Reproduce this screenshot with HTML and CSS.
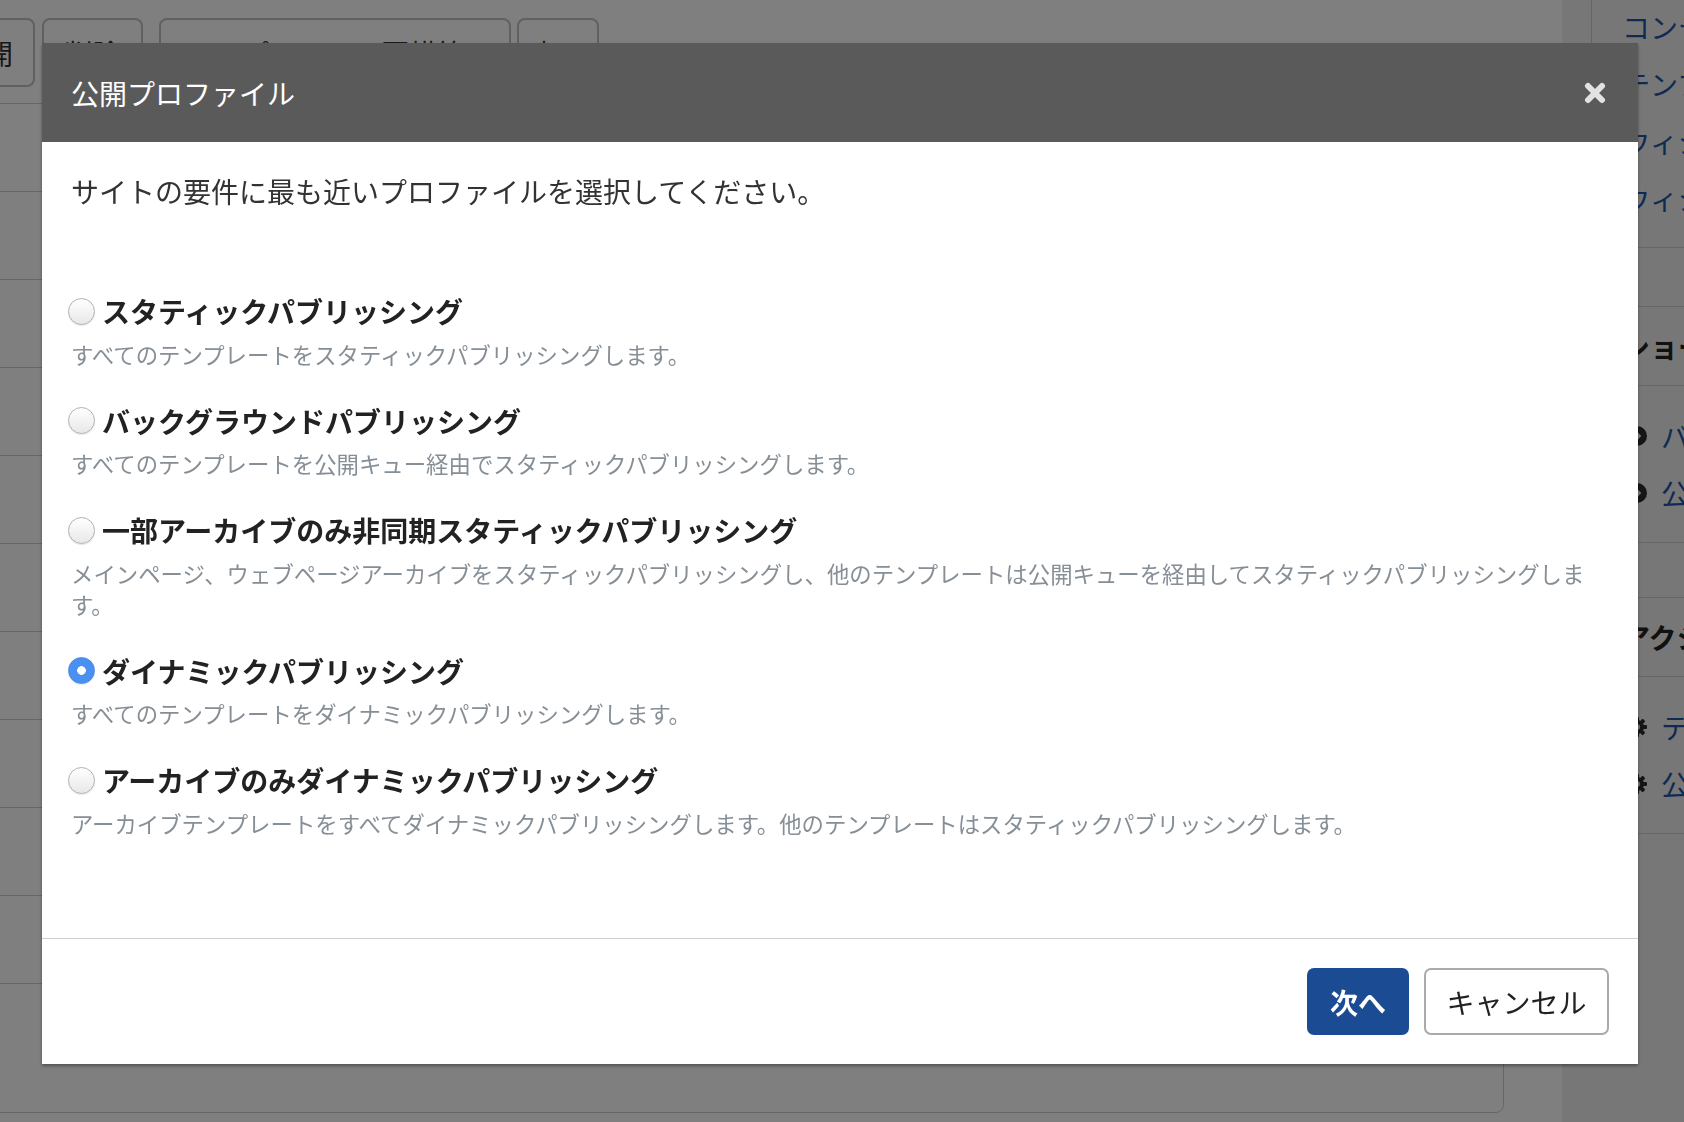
FILE: index.html
```html
<!DOCTYPE html>
<html lang="ja">

<head>
    <meta charset="UTF-8">
    <title>公開プロファイル</title>
    <link rel="stylesheet" href="styles.css">
</head>

<body>

    <div class="page">

        <!-- Contenido principal (detrás del modal) -->
        <div class="main">
            <div class="toolbar">
                <button class="tool tool-publish">公開</button>
                <button class="tool tool-delete">削除</button>
                <button class="tool tool-rebuild">テンプレートの再構築</button>
                <button class="tool tool-more">表示</button>
            </div>

            <div class="panel">
                <div class="row"></div>
                <div class="row"></div>
                <div class="row"></div>
                <div class="row"></div>
                <div class="row"></div>
                <div class="row"></div>
                <div class="row"></div>
                <div class="row"></div>
                <div class="row"></div>
                <div class="row"></div>
            </div>
        </div>

        <!-- Barra lateral -->
        <aside class="sidebar">
            <div class="card card-first">
                <ul class="links">
                    <li><a>コンテンツタイプ</a></li>
                    <li><a>テンプレート</a></li>
                    <li><a>ウィジェット</a></li>
                    <li><a>ウィジェットセット</a></li>
                </ul>
            </div>

            <div class="card card-shortcut">
                <h3 class="card-title">ショートカット</h3>
                <ul class="links icon-links">
                    <li>
                        <svg class="icon" viewBox="0 0 22 22">
                            <circle cx="11" cy="11" r="10" fill="#2b2b2b" />
                            <path d="M9 6.5 L13.5 11 L9 15.5" stroke="#efefef" stroke-width="2.6" fill="none" />
                        </svg>
                        <a>バックアップ</a>
                    </li>
                    <li>
                        <svg class="icon" viewBox="0 0 22 22">
                            <circle cx="11" cy="11" r="10" fill="#2b2b2b" />
                            <path d="M9 6.5 L13.5 11 L9 15.5" stroke="#efefef" stroke-width="2.6" fill="none" />
                        </svg>
                        <a>公開キュー</a>
                    </li>
                </ul>
            </div>

            <div class="card card-action">
                <h3 class="card-title">アクション</h3>
                <ul class="links icon-links">
                    <li>
                        <svg class="icon" viewBox="0 0 22 22">
                            <g fill="#2b2b2b">
                                <rect x="9" y="1" width="4" height="20" rx="1" />
                                <rect x="9" y="1" width="4" height="20" rx="1" transform="rotate(45 11 11)" />
                                <rect x="9" y="1" width="4" height="20" rx="1" transform="rotate(90 11 11)" />
                                <rect x="9" y="1" width="4" height="20" rx="1" transform="rotate(135 11 11)" />
                                <circle cx="11" cy="11" r="7" />
                            </g>
                            <circle cx="11" cy="11" r="3" fill="#efefef" />
                        </svg>
                        <a>テンプレートの初期化</a>
                    </li>
                    <li>
                        <svg class="icon" viewBox="0 0 22 22">
                            <g fill="#2b2b2b">
                                <rect x="9" y="1" width="4" height="20" rx="1" />
                                <rect x="9" y="1" width="4" height="20" rx="1" transform="rotate(45 11 11)" />
                                <rect x="9" y="1" width="4" height="20" rx="1" transform="rotate(90 11 11)" />
                                <rect x="9" y="1" width="4" height="20" rx="1" transform="rotate(135 11 11)" />
                                <circle cx="11" cy="11" r="7" />
                            </g>
                            <circle cx="11" cy="11" r="3" fill="#efefef" />
                        </svg>
                        <a>公開プロファイル</a>
                    </li>
                </ul>
            </div>
        </aside>

    </div>

    <div class="backdrop"></div>

    <!-- Modal -->
    <div class="modal">
        <div class="modal-header">
            <h2 class="modal-title">公開プロファイル</h2>
            <button class="close" aria-label="閉じる">
                <svg viewBox="0 0 22 22" width="22" height="22">
                    <path d="M4 4 L18 18 M18 4 L4 18" stroke="#e2e2e2" stroke-width="6" stroke-linecap="round" />
                </svg>
            </button>
        </div>

        <div class="modal-body">
            <p class="lead">サイトの要件に最も近いプロファイルを選択してください。</p>

            <div class="options">
                <div class="option">
                    <label class="option-label"><input type="radio" name="profile" class="radio">スタティックパブリッシング</label>
                    <p class="option-desc">すべてのテンプレートをスタティックパブリッシングします。</p>
                </div>
                <div class="option">
                    <label class="option-label"><input type="radio" name="profile" class="radio">バックグラウンドパブリッシング</label>
                    <p class="option-desc">すべてのテンプレートを公開キュー経由でスタティックパブリッシングします。</p>
                </div>
                <div class="option">
                    <label class="option-label"><input type="radio" name="profile" class="radio">一部アーカイブのみ非同期スタティックパブリッシング</label>
                    <p class="option-desc">メインページ、ウェブページアーカイブをスタティックパブリッシングし、他のテンプレートは公開キューを経由してスタティックパブリッシングします。</p>
                </div>
                <div class="option">
                    <label class="option-label"><input type="radio" name="profile" class="radio" checked>ダイナミックパブリッシング</label>
                    <p class="option-desc">すべてのテンプレートをダイナミックパブリッシングします。</p>
                </div>
                <div class="option">
                    <label class="option-label"><input type="radio" name="profile" class="radio">アーカイブのみダイナミックパブリッシング</label>
                    <p class="option-desc">アーカイブテンプレートをすべてダイナミックパブリッシングします。他のテンプレートはスタティックパブリッシングします。</p>
                </div>
            </div>
        </div>

        <div class="modal-footer">
            <button class="btn btn-primary">次へ</button>
            <button class="btn btn-default">キャンセル</button>
        </div>
    </div>

</body>

</html>
```

FILE: styles.css
```css
html,
body {
    height: 100%;
}

body {
    margin: 0;
    padding: 0;
    overflow: hidden;
    background-color: #ffffff;
    font-family: "Noto Sans CJK JP", "Noto Sans", sans-serif;
    font-size: 28px;
    color: #333333;
}

.page {
    display: flex;
    height: 100%;
}

/* Contenido principal */
.main {
    width: 1562px;
    flex: none;
    padding-right: 58px;
    box-sizing: border-box;
}

.toolbar {
    display: flex;
    padding-top: 18px;
    margin-left: -65px;
}

.tool {
    height: 69px;
    padding: 0;
    border: 2px solid #c0c0c0;
    border-radius: 8px;
    background-color: #ffffff;
    font-family: inherit;
    font-size: 28px;
    color: #333333;
}

.tool-publish {
    width: 100px;
}

.tool-delete {
    width: 101px;
    margin-left: 7px;
}

.tool-rebuild {
    width: 352px;
    margin-left: 16px;
    text-align: left;
    padding-left: 25px;
}

.tool-more {
    width: 82px;
    margin-left: 6px;
}

.panel {
    margin-top: 16px;
    margin-left: -20px;
    height: 1010px;
    box-sizing: border-box;
    border: 1px solid #cccccc;
    border-radius: 8px;
}

.row {
    height: 88px;
    box-sizing: border-box;
    border-bottom: 1px solid #cccccc;
}

/* Barra lateral */
.sidebar {
    flex: 1;
    overflow: hidden;
    background-color: #efefef;
    padding-left: 29px;
    white-space: nowrap;
}

.card {
    border: 1px solid #cccccc;
    border-right: 0;
}

.card-first {
    margin-top: -24px;
}

.card-shortcut {
    margin-top: 58px;
}

.card-action {
    margin-top: 54px;
}

.card-title {
    margin: 0;
    padding-left: 30px;
    line-height: 78px;
    font-size: 28px;
    font-weight: bold;
    color: #222222;
    border-bottom: 1px solid #cccccc;
}

.links {
    list-style: none;
    margin: 0;
    padding: 21px 0 21px 30px;
}

.links li {
    display: flex;
    align-items: center;
    height: 57px;
}

.links a {
    color: #1f56a8;
}

.icon-links li {
    gap: 13px;
}

.icon {
    width: 22px;
    height: 22px;
    margin-left: 4px;
    flex: none;
}

/* Fondo oscuro */
.backdrop {
    position: fixed;
    top: 0;
    left: 0;
    right: 0;
    bottom: 0;
    background-color: rgba(0, 0, 0, 0.5);
}

/* Modal */
.modal {
    position: fixed;
    top: 43px;
    left: 42px;
    width: 1596px;
    background-color: #ffffff;
    box-shadow: 0 2px 3px rgba(0, 0, 0, 0.35);
}

.modal-header {
    display: flex;
    align-items: center;
    justify-content: space-between;
    height: 99px;
    padding: 0 32px 0 29px;
    background-color: #5a5a5a;
}

.modal-title {
    margin: 0;
    font-size: 28px;
    font-weight: normal;
    line-height: 1;
    color: #ffffff;
}

.close {
    display: flex;
    padding: 0;
    border: 0;
    background: none;
}

.modal-body {
    height: 796px;
    box-sizing: border-box;
    padding: 28px 29px;
}

.lead {
    margin: 0 0 78px;
    line-height: 42px;
    color: #333333;
}

.options {
    display: flex;
    flex-direction: column;
    gap: 30px;
}

.option-label {
    display: flex;
    align-items: center;
    line-height: 42px;
    font-weight: bold;
    color: #222222;
}

.radio {
    appearance: none;
    flex: none;
    width: 27px;
    height: 27px;
    margin: 0 7px 0 -3px;
    border: 1px solid #b0b0b0;
    border-radius: 50%;
    background: linear-gradient(#ffffff, #e8e8e8);
    box-shadow: 0 1px 1px rgba(0, 0, 0, 0.1);
}

.radio:checked {
    border-color: #3f88ec;
    background: radial-gradient(circle, #ffffff 0 4px, #4a90f0 4.6px);
}

.option-desc {
    margin: 6.5px 0 0;
    font-size: 22.4px;
    line-height: 31px;
    color: #868e96;
}

.modal-footer {
    display: flex;
    justify-content: flex-end;
    gap: 15px;
    padding: 29px;
    border-top: 1px solid #cfcfcf;
}

.btn {
    height: 67px;
    box-sizing: border-box;
    font-family: inherit;
    font-size: 28px;
    border-radius: 7px;
}

.btn-primary {
    width: 102px;
    border: 0;
    background-color: #1b4c93;
    color: #ffffff;
    font-weight: bold;
}

.btn-default {
    width: 185px;
    border: 2px solid #aaaaaa;
    background-color: #ffffff;
    color: #222222;
}
```
